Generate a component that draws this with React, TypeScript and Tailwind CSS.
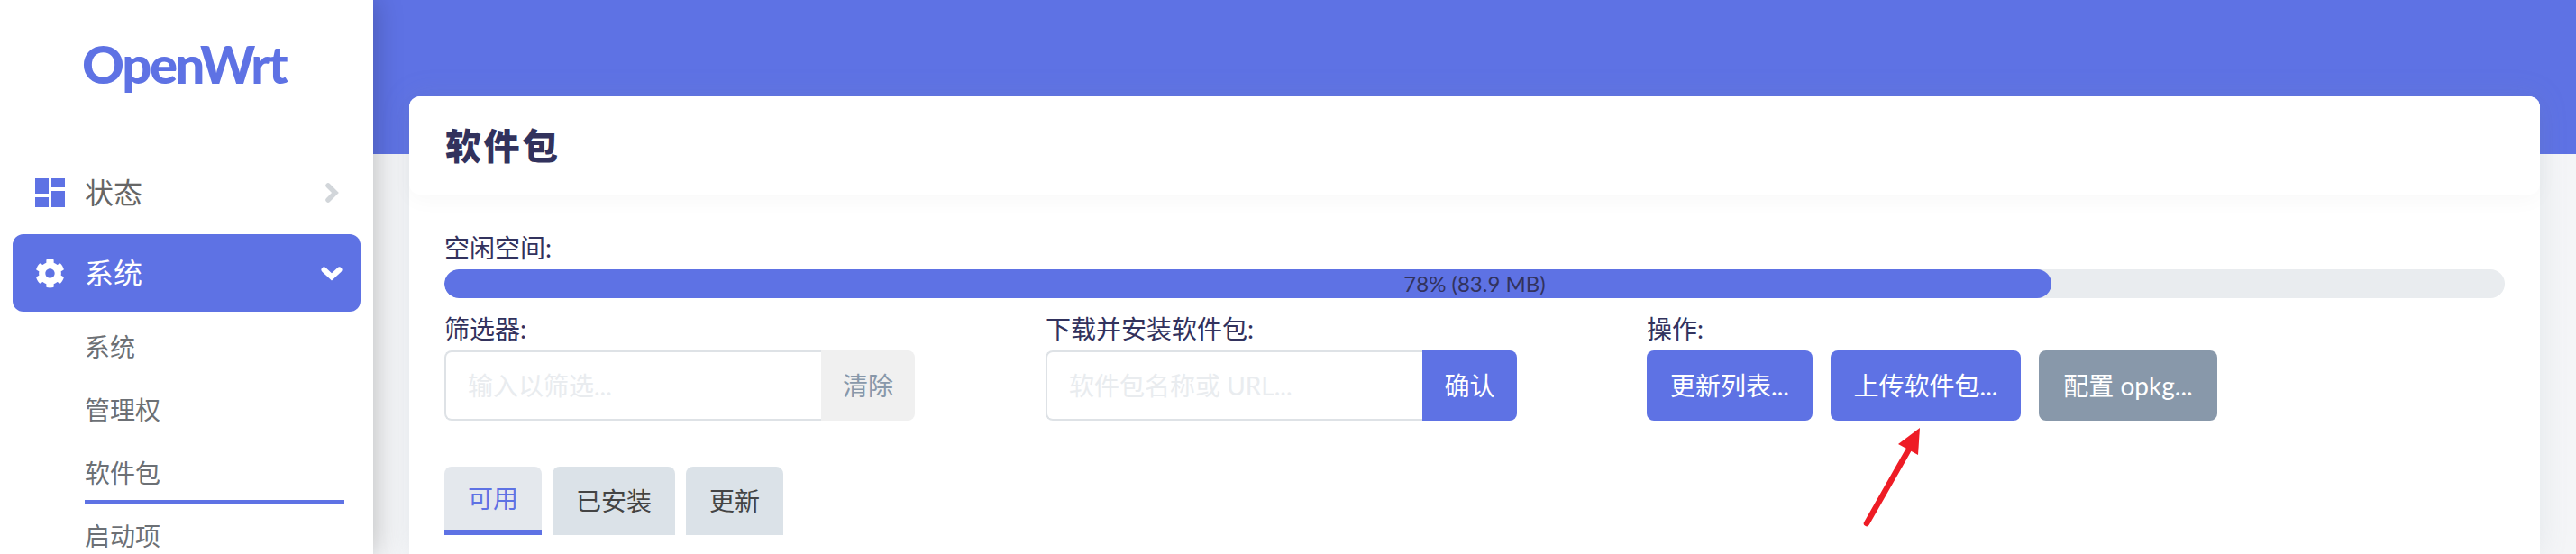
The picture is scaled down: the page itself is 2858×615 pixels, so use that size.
import { FaCog } from "react-icons/fa";

function Dashboard() {
  return (
    <svg width="33" height="32" viewBox="0 0 33 32" className="shrink-0" fill="#5e72e4">
      <rect x="0" y="0" width="15" height="17" />
      <rect x="0" y="21" width="15" height="11" />
      <rect x="18" y="0" width="15" height="10" />
      <rect x="18" y="14" width="15" height="18" />
    </svg>
  );
}

function Chevron({ down }: { down?: boolean }) {
  return (
    <svg width="24" height="24" viewBox="0 0 24 24" className="ml-auto shrink-0" fill="none">
      {down ? (
        <polyline points="3.5,8.5 12,16.5 20.5,8.5" stroke="#ffffff" strokeWidth="6" strokeLinecap="round" strokeLinejoin="miter" />
      ) : (
        <polyline points="8,4 16,12 8,20" stroke="#d2d6da" strokeWidth="5.5" strokeLinecap="round" strokeLinejoin="miter" />
      )}
    </svg>
  );
}

function Arrow() {
  return (
    <svg className="absolute left-[2060px] top-[470px]" width="80" height="120" viewBox="2060 470 80 120">
      <line x1="2071" y1="581" x2="2120" y2="495" stroke="#ee1c25" strokeWidth="6.5" strokeLinecap="round" />
      <polygon points="2130,475 2106,493 2128,505" fill="#ee1c25" />
    </svg>
  );
}

function Label({ children }: { children: React.ReactNode }) {
  return <div className="mb-[4px] h-[40px] text-[28px] leading-[40px] text-[#32325d]">{children}</div>;
}

function TextBox({ placeholder, w }: { placeholder: string; w: string }) {
  return (
    <input
      readOnly
      placeholder={placeholder}
      className={
        w +
        " h-[78px] rounded-l-[8px] border-2 border-r-0 border-[#dee2e6] bg-white px-[24px] text-[28px] outline-none placeholder:text-[#e9ecef]"
      }
    />
  );
}

function Btn({ children, className }: { children: React.ReactNode; className: string }) {
  return <div className={"flex h-[78px] items-center justify-center text-[28px] " + className}>{children}</div>;
}

export default function App() {
  return (
    <div className="relative flex h-[615px] w-[2858px] overflow-hidden bg-[#f4f5f7] font-['Lato','Noto_Sans_CJK_SC',sans-serif]">
      <aside className="relative z-10 flex w-[414px] shrink-0 flex-col bg-white shadow-[0_0_30px_rgba(0,0,0,0.25)]">
        <div className="h-[171px] shrink-0 pl-[91px] pt-[36px] text-[58px] font-black leading-[70px] tracking-[-2.4px] text-[#5e72e4]">
          OpenWrt
        </div>
        <div className="mx-[14px] flex h-[86px] shrink-0 items-center pl-[25px] pr-[20px] text-[32px] text-[#666666]">
          <Dashboard />
          <span className="ml-[22px]">状态</span>
          <Chevron />
        </div>
        <div className="mx-[14px] mt-[3px] flex h-[86px] shrink-0 items-center rounded-[12px] bg-[#5e72e4] pl-[25px] pr-[20px] text-[32px] text-white">
          <FaCog size={33} className="shrink-0" />
          <span className="ml-[22px]">系统</span>
          <Chevron down />
        </div>
        <div className="flex shrink-0 flex-col pl-[94px] pr-[32px] pt-[4px] text-[28px] leading-[70px] text-[#6c7075]">
          <div className="h-[70px] shrink-0">系统</div>
          <div className="h-[70px] shrink-0">管理权</div>
          <div className="mb-px h-[69px] shrink-0 border-b-4 border-[#5e72e4]">软件包</div>
          <div className="h-[70px] shrink-0">启动项</div>
        </div>
      </aside>
      <main className="flex-1 bg-[linear-gradient(#5e72e4_171px,#f4f5f7_171px)] pl-[40px] pr-[40px] pt-[107px]">
        <div className="flex h-[508px] flex-col rounded-t-[12px] bg-white shadow-[0_0_32px_rgba(136,152,170,0.15)]">
          <div className="flex h-[109px] shrink-0 items-center rounded-[12px] bg-white pl-[40px] text-[40px] font-black tracking-[2.5px] text-[#32325d] shadow-[0_6px_24px_rgba(0,0,0,0.03)]">
            软件包
          </div>
          <div className="px-[39px] pt-[39px]">
            <Label>空闲空间:</Label>
            <div className="relative h-[32px] overflow-hidden rounded-full bg-[#e9ecef]">
              <div className="h-full w-[78%] rounded-full bg-[#5e72e4]" />
              <div className="absolute inset-0 flex items-center justify-center text-[24px] text-[#32325d]">78% (83.9 MB)</div>
            </div>
            <div className="mt-[14px] grid grid-cols-[667px_667px_1fr]">
              <div>
                <Label>筛选器:</Label>
                <div className="flex">
                  <TextBox placeholder="输入以筛选..." w="w-[418px]" />
                  <Btn className="w-[104px] rounded-r-[8px] bg-[#f0f0f0] text-[#8898aa]">清除</Btn>
                </div>
              </div>
              <div>
                <Label>下载并安装软件包:</Label>
                <div className="flex">
                  <TextBox placeholder="软件包名称或 URL..." w="w-[418px]" />
                  <Btn className="w-[105px] rounded-r-[8px] bg-[#5e72e4] text-white">确认</Btn>
                </div>
              </div>
              <div>
                <Label>操作:</Label>
                <div className="flex gap-[20px]">
                  <Btn className="w-[184px] rounded-[8px] bg-[#5e72e4] text-white">更新列表...</Btn>
                  <Btn className="w-[211px] rounded-[8px] bg-[#5e72e4] text-white">上传软件包...</Btn>
                  <Btn className="w-[198px] rounded-[8px] bg-[#8898aa] text-white">配置 opkg...</Btn>
                </div>
              </div>
            </div>
            <div className="mt-[51px] flex gap-[12px] text-[28px]">
              <div className="flex h-[76px] w-[108px] items-center justify-center rounded-t-[8px] border-b-[6px] border-[#5e72e4] bg-[#e4e8ed] text-[#5e72e4]">可用</div>
              <div className="flex h-[76px] w-[136px] items-center justify-center rounded-t-[8px] bg-[#dbe2e8] text-[#444444]">已安装</div>
              <div className="flex h-[76px] w-[108px] items-center justify-center rounded-t-[8px] bg-[#dbe2e8] text-[#444444]">更新</div>
            </div>
          </div>
        </div>
      </main>
      <Arrow />
    </div>
  );
}
